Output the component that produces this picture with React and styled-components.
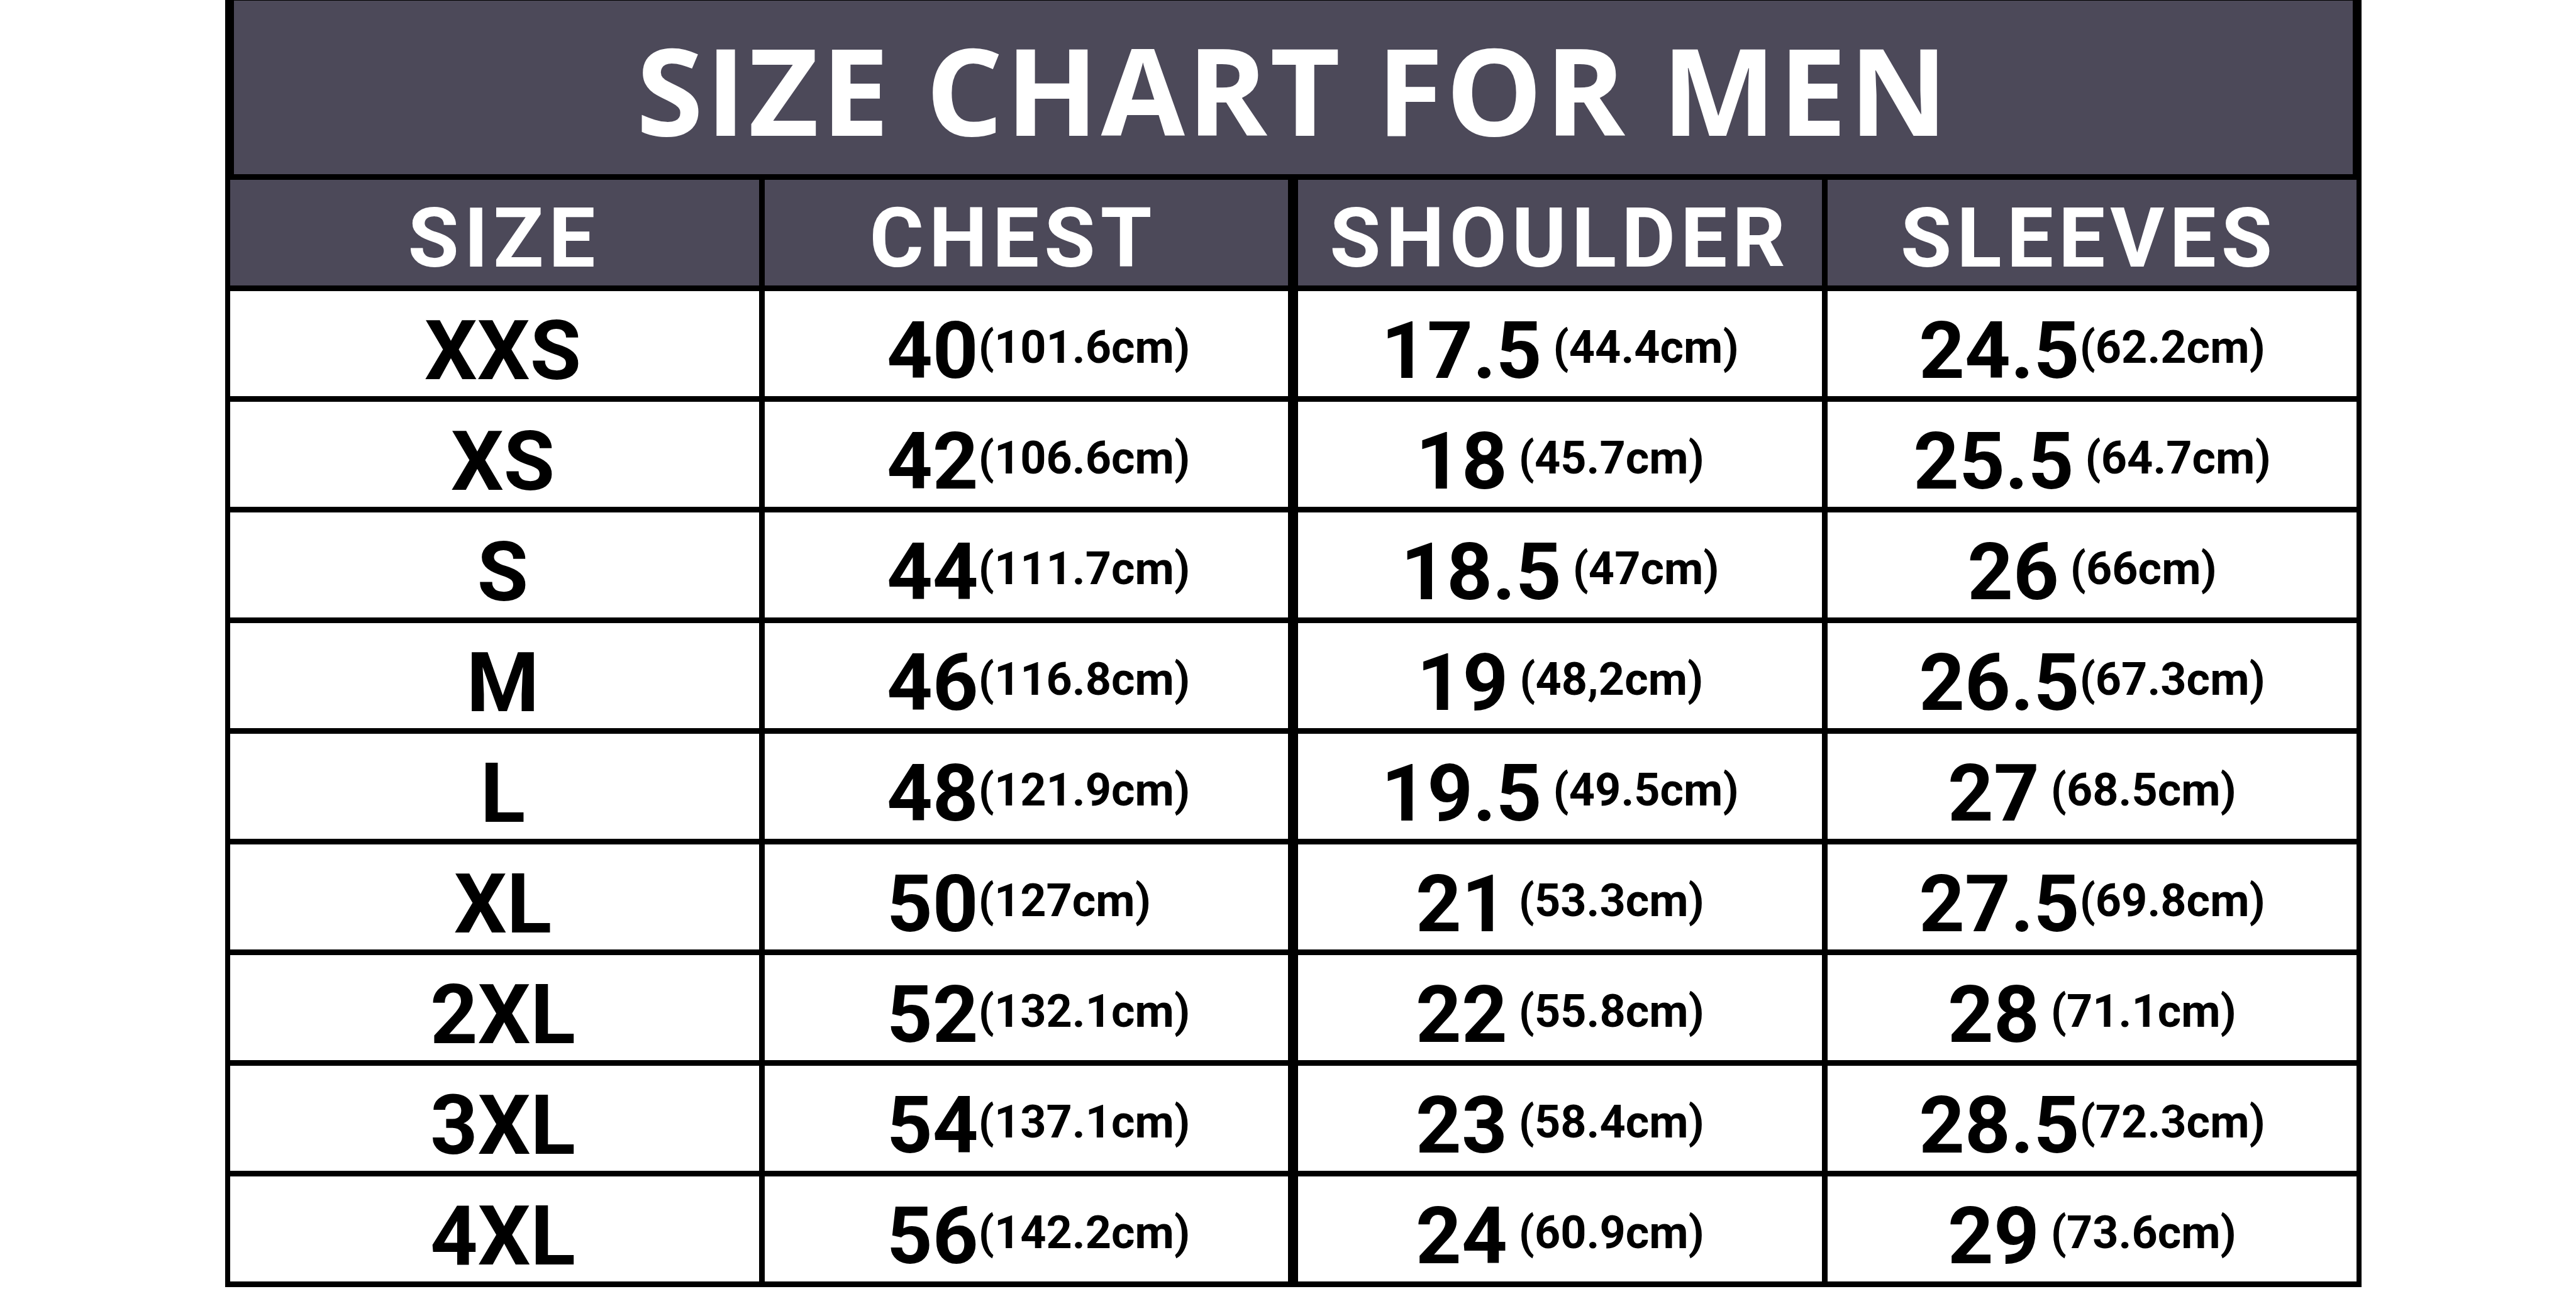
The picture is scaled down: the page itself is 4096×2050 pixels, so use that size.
import React from "react";
import styled, { createGlobalStyle } from "styled-components";

const GlobalStyle = createGlobalStyle`
  html, body {
    margin: 0;
    padding: 0;
    background: #ffffff;
  }
  body {
    font-family: Roboto, "Liberation Sans", sans-serif;
  }
`;

const Page = styled.div`
  width: 4096px;
  height: 2050px;
  background: #ffffff;
  padding-left: 358px;
  box-sizing: border-box;
`;

const Chart = styled.div`
  width: 3397px;
`;

const Title = styled.div`
  height: 272px;
  padding-top: 4px;
  background: #4c4959;
  border: 14px solid #000;
  border-top-width: 1px;
  border-bottom-width: 9px;
  display: flex;
  align-items: center;
  justify-content: center;
  color: #fff;
  font-family: "Open Sans", "Liberation Sans", sans-serif;
  font-weight: 700;
  font-size: 193px;
  line-height: 1;
  letter-spacing: 4px;
`;

const Grid = styled.div`
  display: grid;
  grid-template-columns: 841px 832px 840px 841px;
  grid-template-rows: 168px repeat(9, 167px);
  column-gap: 9px;
  row-gap: 9px;
  background: #000;
  padding: 0 8px 9px;
`;

const HeadCell = styled.div`
  background: #4c4959;
  color: #fff;
  display: flex;
  align-items: center;
  justify-content: center;
  padding: 18px ${(p) => p.$padRight || 0}px 0 ${(p) => p.$padLeft || 0}px;
  box-sizing: border-box;
  margin-left: ${(p) => (p.$thick ? "7px" : "0")};
  font-family: Roboto, "Liberation Sans", sans-serif;
  font-weight: 700;
  font-size: 132px;
  letter-spacing: 8px;
  line-height: 1;
`;

const Cell = styled.div`
  background: #fff;
  color: #000;
  display: flex;
  align-items: center;
  justify-content: ${(p) => (p.$left ? "flex-start" : "center")};
  padding-left: ${(p) => p.$padLeft || 0}px;
  padding-top: 22px;
  box-sizing: border-box;
  margin-left: ${(p) => (p.$thick ? "7px" : "0")};
  font-family: Roboto, "Liberation Sans", sans-serif;
  font-weight: 700;
  line-height: 1;
  white-space: pre;
`;

const SizeLabel = styled.span`
  font-size: 132px;
`;

const Big = styled.span`
  font-size: 127px;
`;

const Small = styled.span`
  font-size: 72px;
  position: relative;
  top: -5px;
`;

const rows = [
  ["XXS", ["40", "(101.6cm)"], ["17.5", " (44.4cm)"], ["24.5", "(62.2cm)"]],
  ["XS", ["42", "(106.6cm)"], ["18", " (45.7cm)"], ["25.5", " (64.7cm)"]],
  ["S", ["44", "(111.7cm)"], ["18.5", " (47cm)"], ["26", " (66cm)"]],
  ["M", ["46", "(116.8cm)"], ["19", " (48,2cm)"], ["26.5", "(67.3cm)"]],
  ["L", ["48", "(121.9cm)"], ["19.5", " (49.5cm)"], ["27", " (68.5cm)"]],
  ["XL", ["50", "(127cm)"], ["21", " (53.3cm)"], ["27.5", "(69.8cm)"]],
  ["2XL", ["52", "(132.1cm)"], ["22", " (55.8cm)"], ["28", " (71.1cm)"]],
  ["3XL", ["54", "(137.1cm)"], ["23", " (58.4cm)"], ["28.5", "(72.3cm)"]],
  ["4XL", ["56", "(142.2cm)"], ["24", " (60.9cm)"], ["29", " (73.6cm)"]],
];

const Value = ({ v }) => (
  <>
    <Big>{v[0]}</Big>
    <Small>{v[1]}</Small>
  </>
);

const App = () => {
  return (
    <Page>
      <GlobalStyle />
      <Chart>
        <Title>SIZE CHART FOR MEN</Title>
        <Grid>
          <HeadCell $padLeft={30}>SIZE</HeadCell>
          <HeadCell $padRight={42}>CHEST</HeadCell>
          <HeadCell $thick>SHOULDER</HeadCell>
          <HeadCell $padRight={10}>SLEEVES</HeadCell>
          {rows.map((r) => (
            <React.Fragment key={r[0]}>
              <Cell $padLeft={26}>
                <SizeLabel>{r[0]}</SizeLabel>
              </Cell>
              <Cell $left $padLeft={194}>
                <Value v={r[1]} />
              </Cell>
              <Cell $thick>
                <Value v={r[2]} />
              </Cell>
              <Cell>
                <Value v={r[3]} />
              </Cell>
            </React.Fragment>
          ))}
        </Grid>
      </Chart>
    </Page>
  );
};

export default App;
